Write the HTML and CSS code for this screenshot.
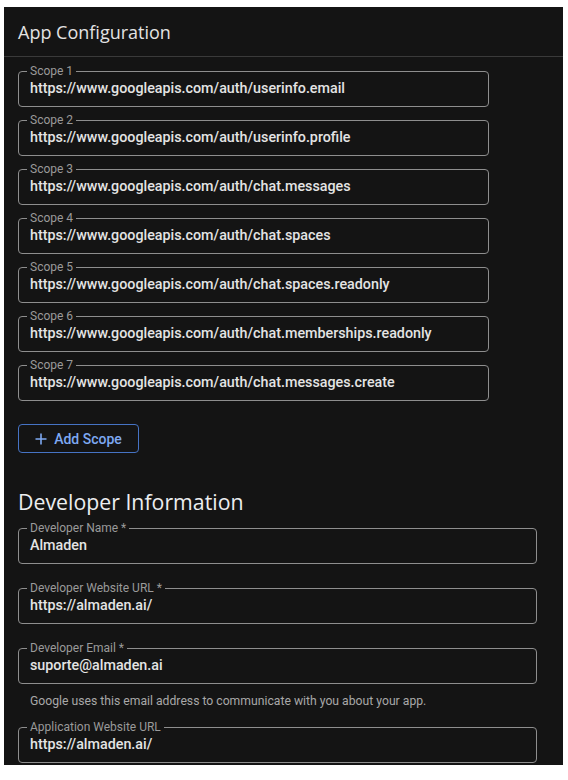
FILE: index.html
```html
<!DOCTYPE html>
<html>
<head>
<meta charset="utf-8">
<link rel="stylesheet" href="styles.css">
</head>
<body>
<div class="panel">
  <div class="header">App Configuration</div>
  <div class="content">
    <div class="scopes">
      <fieldset class="field scope"><legend>Scope 1</legend><div class="value">https://www.googleapis.com/auth/userinfo.email</div></fieldset>
      <fieldset class="field scope"><legend>Scope 2</legend><div class="value">https://www.googleapis.com/auth/userinfo.profile</div></fieldset>
      <fieldset class="field scope"><legend>Scope 3</legend><div class="value">https://www.googleapis.com/auth/chat.messages</div></fieldset>
      <fieldset class="field scope"><legend>Scope 4</legend><div class="value">https://www.googleapis.com/auth/chat.spaces</div></fieldset>
      <fieldset class="field scope"><legend>Scope 5</legend><div class="value">https://www.googleapis.com/auth/chat.spaces.readonly</div></fieldset>
      <fieldset class="field scope"><legend>Scope 6</legend><div class="value">https://www.googleapis.com/auth/chat.memberships.readonly</div></fieldset>
      <fieldset class="field scope"><legend>Scope 7</legend><div class="value">https://www.googleapis.com/auth/chat.messages.create</div></fieldset>
    </div>
    <button class="add-btn"><svg class="plus" width="12" height="12" viewBox="0 0 12 12"><path d="M6 0.5v11M0.5 6h11" stroke="currentColor" stroke-width="1.6" fill="none"/></svg>Add Scope</button>
    <h2 class="section-title">Developer Information</h2>
    <div class="dev">
      <fieldset class="field wide"><legend>Developer Name *</legend><div class="value">Almaden</div></fieldset>
      <fieldset class="field wide"><legend>Developer Website URL *</legend><div class="value">https://almaden.ai/</div></fieldset>
      <div class="group">
        <fieldset class="field wide grouped"><legend>Developer Email *</legend><div class="value">suporte@almaden.ai</div></fieldset>
        <div class="helper">Google uses this email address to communicate with you about your app.</div>
      </div>
      <fieldset class="field wide"><legend>Application Website URL</legend><div class="value">https://almaden.ai/</div></fieldset>
    </div>
  </div>
</div>
</body>
</html>
```

FILE: styles.css
```css
html, body {
  margin: 0;
  padding: 0;
  background: #ffffff;
}
.panel {
  margin: 7px 0 0 4px;
  width: 559px;
  height: 758px;
  background: #141414;
  overflow: hidden;
  font-family: Roboto, "Liberation Sans", sans-serif;
}
.header {
  height: 50px;
  box-sizing: border-box;
  border-bottom: 1px solid #3a3a3a;
  padding-left: 14px;
  display: flex;
  align-items: center;
  font-family: "Open Sans", Roboto, sans-serif;
  font-size: 18px;
  color: #e3e3e3;
}
.content {
  padding: 7px 0 0 14px;
}
.scopes {
  display: flex;
  flex-direction: column;
  gap: 6px;
}
.field {
  margin: 0;
  padding: 2px 11px 9px 11px;
  border: 1px solid #8e8e8e;
  border-radius: 4px;
  box-sizing: border-box;
  min-width: 0;
}
.field legend {
  font-size: 12px;
  line-height: 14px;
  color: #9a9a9a;
  padding: 0 3px;
  margin-left: -3px;
}
.scope {
  width: 471px;
}
.wide {
  width: 519px;
  margin-bottom: 17px;
}
.wide.grouped {
  margin-bottom: 0;
}
.value {
  font-size: 14.3px;
  line-height: 17px;
  font-weight: 500;
  color: #e4e4e4;
  white-space: nowrap;
}
.add-btn {
  margin-top: 23px;
  width: 121px;
  height: 29px;
  background: transparent;
  border: 1px solid #4673c4;
  border-radius: 4px;
  color: #7ea9f2;
  font-family: Roboto, "Liberation Sans", sans-serif;
  font-size: 14px;
  font-weight: 500;
  display: flex;
  align-items: center;
  justify-content: center;
  gap: 7px;
  padding: 0;
}
.plus {
  display: block;
}
.section-title {
  margin: 35px 0 5px 0;
  font-family: "Open Sans", Roboto, sans-serif;
  font-weight: 400;
  font-size: 21.3px;
  line-height: 28px;
  color: #eceef0;
}
.dev {
  display: flex;
  flex-direction: column;
}
.group {
  display: flex;
  flex-direction: column;
}
.helper {
  margin: 10px 0 12px 12px;
  font-size: 12.2px;
  line-height: 14px;
  color: #a8a8a8;
}
```
